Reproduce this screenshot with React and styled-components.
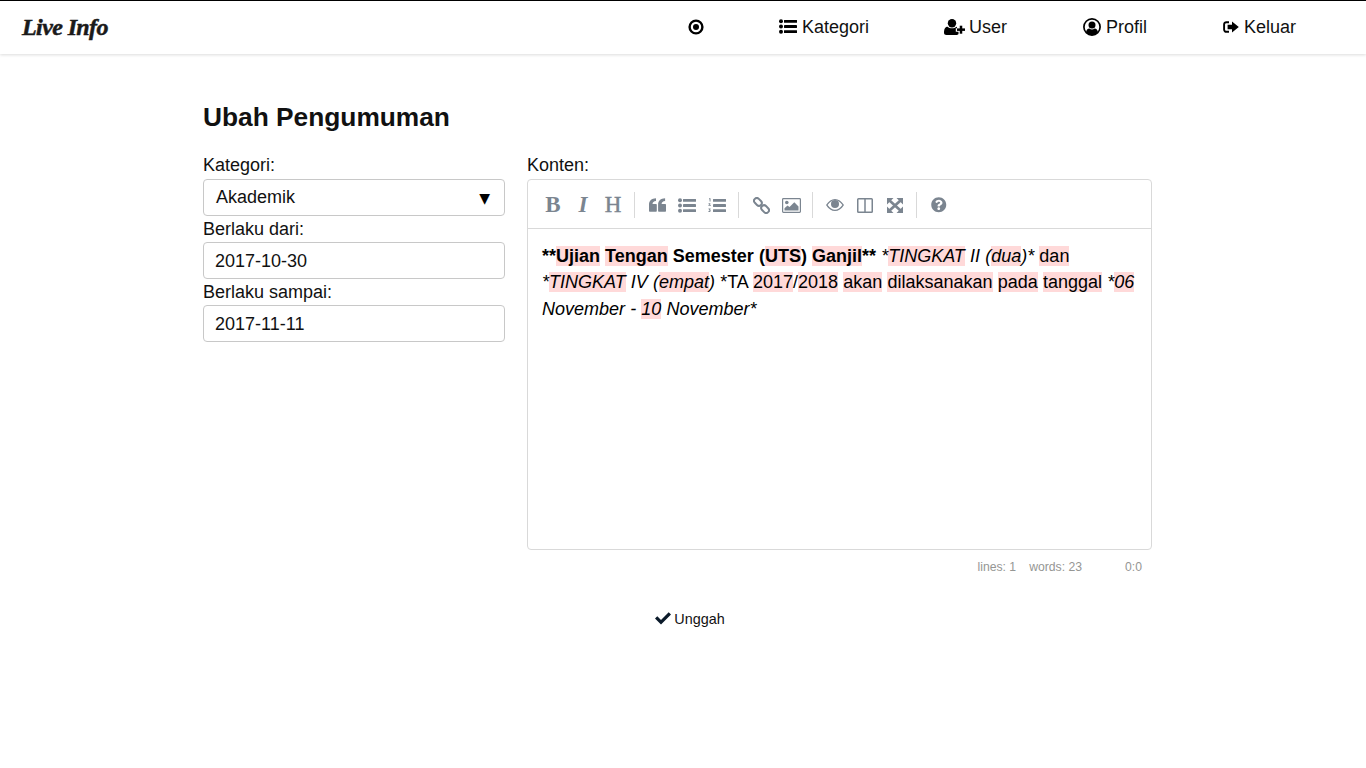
import React from "react";
import styled, { createGlobalStyle } from "styled-components";
import { FaQuestionCircle } from "react-icons/fa";

const Global = createGlobalStyle`
  html, body { margin: 0; background: #fff; }
  body { font-family: "Liberation Sans", Arial, sans-serif; color: #111; }
  * { box-sizing: border-box; }
`;

const Navbar = styled.nav`
  height: 54px;
  border-top: 1px solid #000;
  padding: 0 32px 2px 22px;
  display: flex;
  align-items: center;
  justify-content: space-between;
  background: #fff;
  box-shadow: 0 1px 3px rgba(0, 0, 0, 0.14);
`;
const Brand = styled.a`
  padding-top: 2px;
  font-family: "Liberation Serif", serif;
  font-weight: 700;
  font-style: italic;
  font-size: 24px;
  letter-spacing: -0.6px;
  color: #1a1a1a;
  -webkit-text-stroke: 0.5px #1a1a1a;
`;
const NavLinks = styled.div`
  display: flex;
  align-items: center;
`;
const NavLink = styled.a`
  display: flex;
  align-items: center;
  gap: ${(p) => p.$gap ?? 5}px;
  padding: 0 ${(p) => p.$right ?? 38}px 0 38px;
  font-size: 18px;
  line-height: 24px;
  color: #111;
  svg { display: block; color: #000; flex: none; }
`;
const Main = styled.main`
  width: 949px;
  margin-left: 203px;
  padding-top: 48px;
`;
const Title = styled.h1`
  margin: 0 0 19px;
  font-size: 26.3px;
  line-height: 31px;
  font-weight: 700;
  color: #111;
`;
const Columns = styled.div`
  display: grid;
  grid-template-columns: 302px 625px;
  column-gap: 22px;
`;
const Side = styled.div`
  display: flex;
  flex-direction: column;
`;
const Label = styled.label`
  display: block;
  font-size: 18px;
  line-height: 26px;
  color: #111;
  &:first-child { padding-bottom: 1px; }
`;
const SelectBox = styled.div`
  height: 37px;
  border: 1px solid #c8c8c8;
  border-radius: 4px;
  padding: 0 14px 0 12px;
  display: flex;
  align-items: center;
  justify-content: space-between;
  font-size: 18px;
  color: #111;
`;
const Arrow = styled.span`
  font-family: "DejaVu Sans", sans-serif;
  font-size: 14px;
  color: #000;
`;
const Input = styled.input`
  height: 37px;
  width: 100%;
  border: 1px solid #c8c8c8;
  border-radius: 4px;
  padding: 2px 11px 0;
  font-family: inherit;
  font-size: 18px;
  color: #111;
  background: #fff;
  outline: none;
`;
const Editor = styled.div`
  height: 371px;
  border: 1px solid #d9d9d9;
  border-radius: 4px;
  display: flex;
  flex-direction: column;
`;
const Toolbar = styled.div`
  height: 49px;
  flex: none;
  border-bottom: 1px solid #d9d9d9;
  padding: 2px 0 0 10px;
  display: flex;
  align-items: center;
`;
const Tool = styled.span`
  width: 30px;
  height: 30px;
  display: flex;
  align-items: center;
  justify-content: center;
  color: #7b8590;
  svg { display: block; flex: none; }
`;
const LetterTool = styled(Tool)`
  font-family: "Liberation Serif", serif;
  font-size: 23px;
  font-weight: ${(p) => (p.$plain ? 400 : 700)};
  font-style: ${(p) => (p.$italic ? "italic" : "normal")};
  -webkit-text-stroke: ${(p) => (p.$plain ? "0.5px #7b8590" : "0")};
`;
const Sep = styled.i`
  width: 1px;
  height: 26px;
  margin: 0 7px 0 6px;
  background: #d9d9d9;
`;
const Content = styled.div`
  padding: 13.6px 14px;
  font-size: 18px;
  line-height: 26.6px;
  word-spacing: 0.15px;
  color: #000;
  white-space: pre-wrap;
`;
const Strong = styled.strong`
  font-weight: 700;
  word-spacing: 0.05px;
`;
const Em = styled.em`font-style: italic;`;
const Typo = styled.span`background: rgba(255, 0, 0, 0.15);`;
const Status = styled.div`
  display: flex;
  justify-content: flex-end;
  padding: 10px 10px 0 0;
  font-size: 12.2px;
  line-height: 14px;
  color: #959694;
`;
const StatusItem = styled.span`
  margin-left: 13px;
  text-align: right;
  min-width: ${(p) => p.$min || 0}px;
`;
const Actions = styled.div`
  display: flex;
  justify-content: center;
  padding: 35px 0 0 25px;
`;
const Submit = styled.button`
  display: flex;
  align-items: center;
  gap: 3px;
  border: 0;
  background: none;
  padding: 0;
  font-family: inherit;
  font-size: 14.4px;
  line-height: 20px;
  color: #111;
  svg { display: block; color: #0b1a2a; margin-top: -1px; }
`;

const DotCircle = () => (
  <svg width="16" height="16" viewBox="0 0 16 16">
    <circle cx="8" cy="8" r="6.4" fill="none" stroke="currentColor" strokeWidth="2.4" />
    <circle cx="8" cy="8" r="3" fill="currentColor" />
  </svg>
);
const ListUl = () => (
  <svg width="18" height="15" viewBox="0 0 18 15" fill="currentColor">
    <circle cx="2" cy="2.3" r="2" /><circle cx="2" cy="7.5" r="2" /><circle cx="2" cy="12.7" r="2" />
    <rect x="5" y="0.9" width="13" height="2.9" rx="0.4" />
    <rect x="5" y="6.05" width="13" height="2.9" rx="0.4" />
    <rect x="5" y="11.2" width="13" height="2.9" rx="0.4" />
  </svg>
);
const ListOl = () => (
  <svg width="18" height="15" viewBox="0 0 18 15" fill="currentColor">
    <path d="M1 0.3h1.5v3.2h-0.9v-2.2h-0.6z" />
    <path d="M0.4 5.4q1-0.9 2 0q.5 .8-.7 1.6h1.2v.8H0.4v-.7q1.500-1 1.200-1.300q-.4-.3-1 .2z" />
    <path d="M0.5 10.4h2.1v.8l-.7 .5q1 .3 .8 1.200q-.4 1.400-2.300 .8v-.8q1.300 .4 1.400-.2q0-.5-.9-.4v-.6l.6-.5H0.5z" />
    <rect x="5" y="0.9" width="13" height="2.9" rx="0.4" />
    <rect x="5" y="6.05" width="13" height="2.9" rx="0.4" />
    <rect x="5" y="11.2" width="13" height="2.9" rx="0.4" />
  </svg>
);
const UserPlus = () => (
  <svg width="21" height="16" viewBox="0 0 21 16" fill="currentColor">
    <circle cx="8" cy="4.2" r="4.2" />
    <path d="M0 13.800c0-3.400 1-6 3.600-6 1.200 1 2.800 1.500 4.400 1.500s3.200-.5 4.400-1.500l.6.1v1.400h-1.200v3.400H14.500V15c-.5.7-1.400 1-2.400 1H2.400C1 16 0 15.200 0 13.800z" />
    <rect x="13" y="9.4" width="8" height="2.5" />
    <rect x="15.75" y="6.7" width="2.5" height="8" />
  </svg>
);
const UserCircle = () => (
  <svg width="18" height="18" viewBox="0 0 18 18">
    <circle cx="9" cy="9" r="8.1" fill="none" stroke="#000" strokeWidth="1.7" />
    <circle cx="9" cy="7" r="3.5" fill="#000" />
    <path d="M3 14.500c.3-2.600 1.700-3.900 3.300-4 1.600 1.200 3.800 1.200 5.400 0 1.600.1 3 1.400 3.300 4-3 3.400-9 3.400-12 0z" fill="#000" />
  </svg>
);
const SignOut = () => (
  <svg width="16" height="12" viewBox="0 0 16 12" fill="currentColor">
    <path d="M6 1.200H3.400A2.200 2.200 0 0 0 1.100 3.400v5.200a2.200 2.200 0 0 0 2.300 2.200H6" fill="none" stroke="currentColor" strokeWidth="1.9" />
    <path d="M4.600 3.700H9V.6L15.800 6 9 11.400V8.300H4.600z" />
  </svg>
);
const Check = () => (
  <svg width="16" height="13" viewBox="0 0 16 13" fill="currentColor">
    <path d="M0 6.600 2.300 4.300 6 8 13.700 .3 16 2.600 6 12.600z" />
  </svg>
);
const Quote = () => (
  <svg width="17" height="14" viewBox="0 0 17 14" fill="currentColor">
    <path d="M0 6.500C0 2.800 2.600.4 7 .2v2.700C4.800 3 3.600 4.200 3.500 6H7.100c.4 0 .7.3.7.7v6.400c0 .4-.3.7-.7.7H.7c-.4 0-.7-.3-.7-.7z" />
    <path d="M9.100 6.500C9.100 2.800 11.700.4 16.100.2v2.700c-2.200.1-3.400 1.300-3.500 3.100h3.700c.4 0 .7.3.7.7v6.400c0 .4-.3.7-.7.7H9.800c-.4 0-.7-.3-.7-.7z" />
  </svg>
);
const LinkIcon = () => (
  <svg width="17" height="17" viewBox="0 0 17 17" fill="none" stroke="currentColor" strokeWidth="2">
    <rect x="0.6" y="2.1" width="8.6" height="5.6" rx="2.8" transform="rotate(45 4.9 4.9)" />
    <rect x="7.8" y="9.3" width="8.6" height="5.6" rx="2.8" transform="rotate(45 12.1 12.1)" />
  </svg>
);
const ImageIcon = () => (
  <svg width="19" height="15" viewBox="0 0 19 15">
    <rect x="0.6" y="0.6" width="17.8" height="13.8" rx="0.8" fill="none" stroke="currentColor" strokeWidth="1.2" />
    <circle cx="4.8" cy="4.5" r="1.8" fill="currentColor" />
    <path d="M2.500 12.600V10.300L5.500 7.500 7.500 9 12.300 4.200 16.500 8.400V12.600z" fill="currentColor" />
  </svg>
);
const Eye = () => (
  <svg width="18" height="12" viewBox="0 0 18 12" fill="currentColor">
    <path fillRule="evenodd" d="M0 6C2.600 2 5.600 0 9 0s6.400 2 9 6c-2.600 4-5.600 6-9 6S2.600 10 0 6zm1.600 0C3.800 9.200 6.200 10.800 9 10.800S14.200 9.200 16.400 6C14.200 2.800 11.800 1.200 9 1.200S3.800 2.800 1.600 6z" />
    <circle cx="9" cy="5" r="4" />
  </svg>
);
const ColumnsIcon = () => (
  <svg width="16" height="15" viewBox="0 0 16 15" fill="none" stroke="currentColor" strokeWidth="1.5">
    <rect x="0.75" y="0.75" width="14.5" height="13.5" rx="0.8" />
    <path d="M8 1v13" />
  </svg>
);
const Expand = () => (
  <svg width="16" height="15" viewBox="0 0 16 15" fill="currentColor">
    <path d="M0 0H6.500L0 6.500zM16 0V6.500L9.500 0zM0 15V8.500L6.500 15zM16 15H9.500L16 8.500z" />
    <path d="M2.500 2.500 13.500 12.500M13.500 2.500 2.500 12.500" stroke="currentColor" strokeWidth="2.700" fill="none" />
  </svg>
);

const T = ({ children }) => <Typo>{children}</Typo>;

export default function App() {
  return (
    <>
      <Global />
      <Navbar>
        <Brand>Live Info</Brand>
        <NavLinks>
          <NavLink $right={37}><DotCircle /></NavLink>
          <NavLink $right={37}><ListUl />Kategori</NavLink>
          <NavLink $gap={4}><UserPlus />User</NavLink>
          <NavLink><UserCircle />Profil</NavLink>
          <NavLink><SignOut />Keluar</NavLink>
        </NavLinks>
      </Navbar>
      <Main>
        <Title>Ubah Pengumuman</Title>
        <Columns>
          <Side>
            <Label>Kategori:</Label>
            <SelectBox>Akademik<Arrow>▼</Arrow></SelectBox>
            <Label>Berlaku dari:</Label>
            <Input defaultValue="2017-10-30" />
            <Label>Berlaku sampai:</Label>
            <Input defaultValue="2017-11-11" />
          </Side>
          <div>
            <Label>Konten:</Label>
            <Editor>
              <Toolbar>
                <LetterTool>B</LetterTool>
                <LetterTool $italic>I</LetterTool>
                <LetterTool $plain>H</LetterTool>
                <Sep />
                <Tool><Quote /></Tool>
                <Tool><ListUl /></Tool>
                <Tool><ListOl /></Tool>
                <Sep />
                <Tool><LinkIcon /></Tool>
                <Tool><ImageIcon /></Tool>
                <Sep />
                <Tool><Eye /></Tool>
                <Tool><ColumnsIcon /></Tool>
                <Tool><Expand /></Tool>
                <Sep />
                <Tool><FaQuestionCircle size={15.5} /></Tool>
              </Toolbar>
              <Content>
                <Strong>**<T>Ujian</T> <T>Tengan</T> Semester (<T>UTS</T>) <T>Ganjil</T>**</Strong>{" "}
                <Em>*<T>TINGKAT</T> II (<T>dua</T>)*</Em> <T>dan</T>{" "}
                <Em>*<T>TINGKAT</T> IV (<T>empat</T>)</Em> *TA <T>2017</T>/<T>2018</T> <T>akan</T>{" "}
                <T>dilaksanakan</T> <T>pada</T> <T>tanggal</T>{" "}
                <Em>*<T>06</T></Em> <Em>November - <T>10</T> November*</Em>
              </Content>
            </Editor>
            <Status>
              <StatusItem>lines: 1</StatusItem>
              <StatusItem>words: 23</StatusItem>
              <StatusItem $min={47}>0:0</StatusItem>
            </Status>
          </div>
        </Columns>
        <Actions>
          <Submit type="button"><Check />Unggah</Submit>
        </Actions>
      </Main>
    </>
  );
}
